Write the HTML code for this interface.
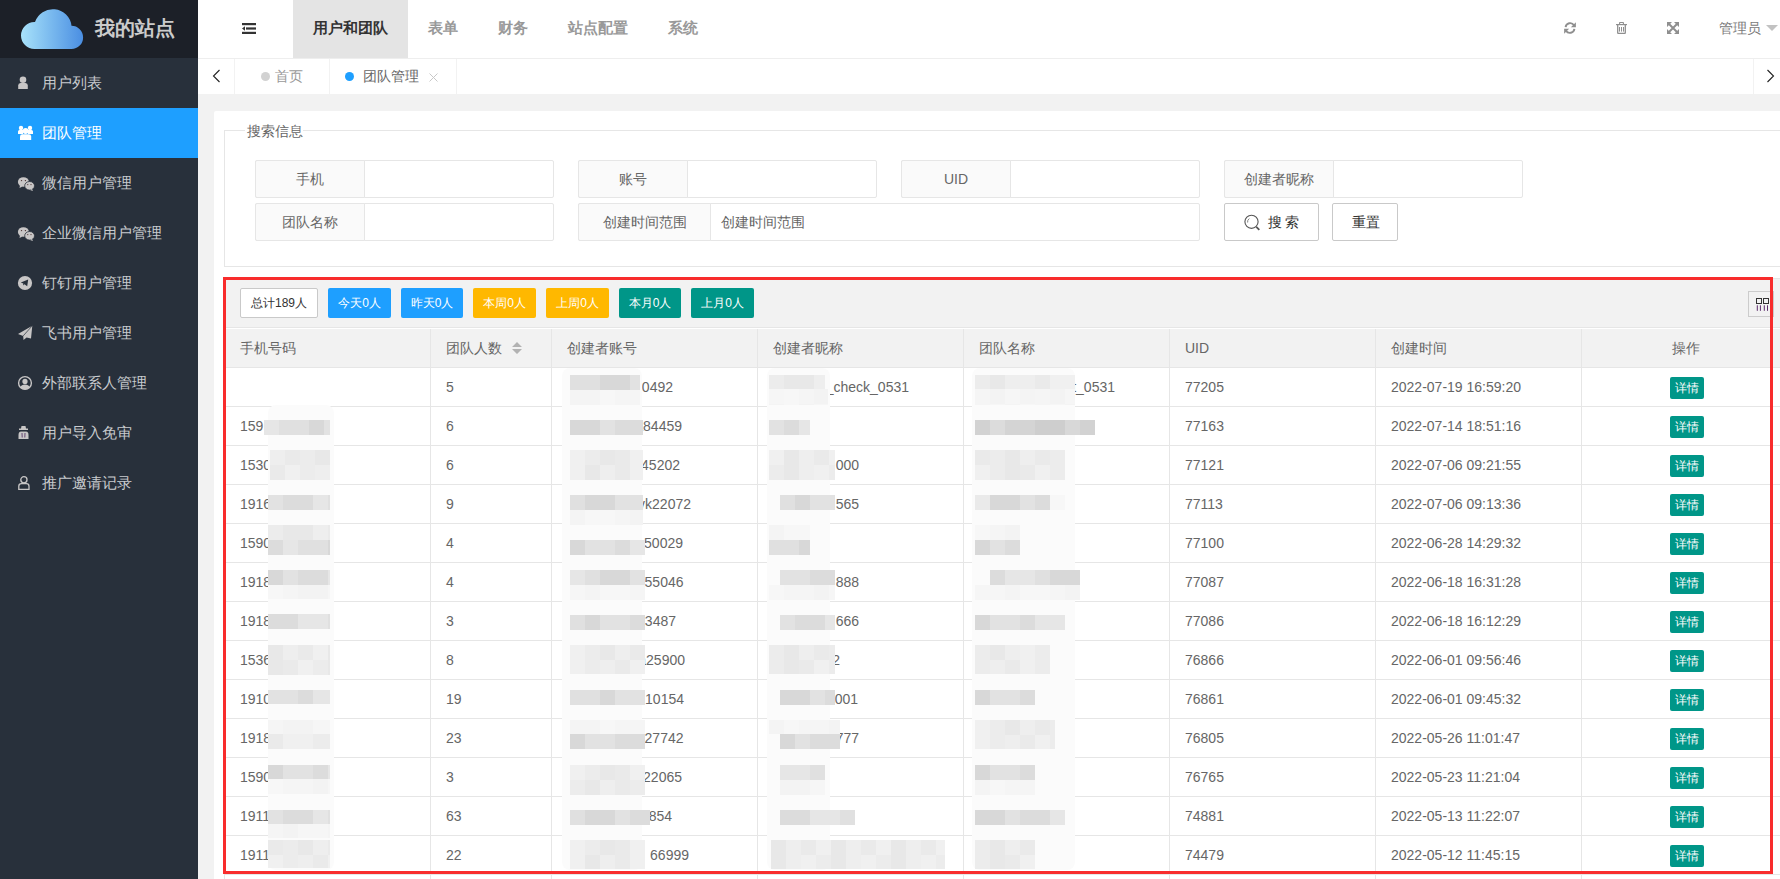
<!DOCTYPE html><html><head><meta charset="utf-8"><style>
*{margin:0;padding:0;box-sizing:border-box}
html,body{width:1780px;height:879px;overflow:hidden}
body{position:relative;background:#f2f2f2;font-family:"Liberation Sans",sans-serif;font-size:14px;color:#666}
.abs{position:absolute}
.t{position:absolute;white-space:nowrap;line-height:1}
</style></head><body>
<div class="abs" style="left:0;top:0;width:198px;height:879px;background:#28303b"></div>
<div class="abs" style="left:0;top:0;width:198px;height:58px;background:#1c2028"></div>
<svg class="abs" style="left:20px;top:8px" width="64" height="42" viewBox="0 0 64 42">
<defs><linearGradient id="cg" x1="0" x2="1" y1="0" y2="0"><stop offset="0" stop-color="#a8e2fa"/><stop offset="0.5" stop-color="#78b8ee"/><stop offset="1" stop-color="#4a8ee2"/></linearGradient></defs>
<path d="M14.5 41 A13.5 13.5 0 0 1 14.5 14 L15 14 A18.8 18.8 0 0 1 51.5 17.8 A11.6 11.6 0 0 1 51.5 41 Z" fill="url(#cg)"/></svg>
<div class="t" style="left:95px;top:18px;font-size:20px;font-weight:bold;color:#cbcbcb">我的站点</div>
<div class="t" style="left:42px;top:75px;font-size:15px;color:#c9cbce">用户列表</div>
<div class="abs" style="left:0;top:108px;width:198px;height:50px;background:#1e9fff"></div>
<div class="t" style="left:42px;top:125px;font-size:15px;color:#fff">团队管理</div>
<div class="t" style="left:42px;top:175px;font-size:15px;color:#c9cbce">微信用户管理</div>
<div class="t" style="left:42px;top:225px;font-size:15px;color:#c9cbce">企业微信用户管理</div>
<div class="t" style="left:42px;top:275px;font-size:15px;color:#c9cbce">钉钉用户管理</div>
<div class="t" style="left:42px;top:325px;font-size:15px;color:#c9cbce">飞书用户管理</div>
<div class="t" style="left:42px;top:375px;font-size:15px;color:#c9cbce">外部联系人管理</div>
<div class="t" style="left:42px;top:425px;font-size:15px;color:#c9cbce">用户导入免审</div>
<div class="t" style="left:42px;top:475px;font-size:15px;color:#c9cbce">推广邀请记录</div>
<svg class="abs" style="left:17px;top:75px" width="12" height="15" viewBox="0 0 12 15"><circle cx="6" cy="4.8" r="3.3" fill="#c8c6c6"/><path d="M1.2 14 L1.2 10.5 Q1.2 8 3.5 8 L8.5 8 Q10.8 8 10.8 10.5 L10.8 14 Z" fill="#c8c6c6"/></svg>
<svg class="abs" style="left:17px;top:125px" width="17" height="16" viewBox="0 0 17 16"><circle cx="4" cy="3" r="2.2" fill="#fff"/><circle cx="13" cy="3" r="2.2" fill="#fff"/><path d="M1 9 L1 6.5 Q1 5 2.5 5 L6 5 L6 9 Z M16 9 L16 6.5 Q16 5 14.5 5 L11 5 L11 9Z" fill="#fff"/><circle cx="8.6" cy="6" r="2.9" fill="#fff"/><path d="M3 15 L3 11.5 Q3 9.3 5.3 9.3 L11.9 9.3 Q14.2 9.3 14.2 11.5 L14.2 15 Z" fill="#fff"/></svg>
<svg class="abs" style="left:17px;top:176px" width="18" height="16" viewBox="0 0 18 16"><ellipse cx="6.4" cy="6" rx="5.5" ry="4.8" fill="#c8c6c6"/><path d="M3 9.5 L2.5 12 L5.5 10.5Z" fill="#c8c6c6"/><ellipse cx="12.6" cy="9.8" rx="4.9" ry="4.3" fill="#c8c6c6" stroke="#28303b" stroke-width="0.8"/><path d="M15 13 L16 15 L13 14Z" fill="#c8c6c6"/><circle cx="4.5" cy="4.6" r="0.7" fill="#4a3030"/><circle cx="8.4" cy="4.6" r="0.7" fill="#4a3030"/><circle cx="10.8" cy="8.6" r="0.6" fill="#4a3030"/><circle cx="14" cy="8.6" r="0.6" fill="#4a3030"/></svg>
<svg class="abs" style="left:17px;top:226px" width="18" height="16" viewBox="0 0 18 16"><ellipse cx="6.4" cy="6" rx="5.5" ry="4.8" fill="#c8c6c6"/><path d="M3 9.5 L2.5 12 L5.5 10.5Z" fill="#c8c6c6"/><ellipse cx="12.6" cy="9.8" rx="4.9" ry="4.3" fill="#c8c6c6" stroke="#28303b" stroke-width="0.8"/><path d="M15 13 L16 15 L13 14Z" fill="#c8c6c6"/><circle cx="4.5" cy="4.6" r="0.7" fill="#4a3030"/><circle cx="8.4" cy="4.6" r="0.7" fill="#4a3030"/><circle cx="10.8" cy="8.6" r="0.6" fill="#4a3030"/><circle cx="14" cy="8.6" r="0.6" fill="#4a3030"/></svg>
<svg class="abs" style="left:17px;top:275px" width="16" height="16" viewBox="0 0 16 16"><circle cx="8" cy="8" r="7.1" fill="#c8c6c6"/><path d="M3.8 7.6 L11.2 4.6 L10.2 11.2 L7.5 9.3 L6.2 10.6 L6.3 8.6 Z" fill="#28303b"/></svg>
<svg class="abs" style="left:17px;top:325px" width="16" height="16" viewBox="0 0 16 16"><path d="M1 8.9 L15.3 0.7 L14 13.6 L9.6 12.5 L6.5 14.9 L6.2 10.9 Z" fill="#c8c6c6"/><path d="M6.2 10.9 L15.3 0.7" stroke="#28303b" stroke-width="0.7"/></svg>
<svg class="abs" style="left:17px;top:375px" width="16" height="16" viewBox="0 0 16 16"><circle cx="8" cy="8" r="6.4" fill="none" stroke="#c8c6c6" stroke-width="1.4"/><circle cx="8" cy="6.4" r="2.6" fill="#c8c6c6"/><path d="M3.3 12.2 Q4.5 9.5 8 9.5 Q11.5 9.5 12.7 12.2 Q10.8 14.4 8 14.4 Q5.2 14.4 3.3 12.2Z" fill="#c8c6c6"/></svg>
<svg class="abs" style="left:17px;top:425px" width="13" height="15" viewBox="0 0 13 15"><path d="M4.5 1 L8.5 1 L9 3.5 L11 3.5 L11 5 L2 5 L2 3.5 L4 3.5Z" fill="#c8c6c6"/><path d="M1.5 14 L1.5 10 Q1.5 6.5 4 6.5 L9 6.5 Q11.5 6.5 11.5 10 L11.5 14 Z" fill="#c8c6c6"/><path d="M5 8 L5.2 12.5 M8 8 L7.8 12.5" stroke="#5a3a6a" stroke-width="0.9"/><path d="M3.2 5.6 L9.8 5.6" stroke="#28303b" stroke-width="0.8"/></svg>
<svg class="abs" style="left:17px;top:475px" width="14" height="16" viewBox="0 0 14 16"><circle cx="6.9" cy="4.8" r="3.1" fill="none" stroke="#c8c6c6" stroke-width="1.3"/><path d="M1.8 14.3 L1.8 11.2 Q1.8 8.6 4.4 8.6 L9.4 8.6 Q12 8.6 12 11.2 L12 14.3 Z" fill="none" stroke="#c8c6c6" stroke-width="1.3"/></svg>
<div class="abs" style="left:198px;top:0;width:1582px;height:58px;background:#fff"></div>
<div class="abs" style="left:293px;top:0;width:115px;height:58px;background:#e4e4e4"></div>
<svg class="abs" style="left:242px;top:23px" width="14" height="11" viewBox="0 0 14 11"><rect x="0" y="0" width="14" height="2.2" fill="#333"/><rect x="4" y="4.4" width="10" height="2.2" fill="#333"/><rect x="0" y="8.8" width="14" height="2.2" fill="#333"/><path d="M0 5.5 L3 3.2 L3 7.8 Z" fill="#333"/></svg>
<div class="t" style="left:313px;top:20px;font-size:15px;font-weight:bold;color:#333">用户和团队</div>
<div class="t" style="left:428px;top:20px;font-size:15px;font-weight:bold;color:#999">表单</div>
<div class="t" style="left:498px;top:20px;font-size:15px;font-weight:bold;color:#999">财务</div>
<div class="t" style="left:568px;top:20px;font-size:15px;font-weight:bold;color:#999">站点配置</div>
<div class="t" style="left:668px;top:20px;font-size:15px;font-weight:bold;color:#999">系统</div>
<div class="t" style="left:1719px;top:21px;font-size:14px;color:#7a7a7a">管理员</div>
<svg class="abs" style="left:1766px;top:25px" width="12" height="6"><path d="M0 0 L12 0 L6 6 Z" fill="#c2c2c2"/></svg>
<svg class="abs" style="left:1564px;top:22px" width="12" height="12" viewBox="0 0 12 12"><path d="M1.6 5.2 A4.6 4.6 0 0 1 10 3.2" fill="none" stroke="#8f8f8f" stroke-width="1.9"/><path d="M11.9 0.3 L11.9 5.3 L6.9 5.3Z" fill="#8f8f8f"/><path d="M10.4 6.8 A4.6 4.6 0 0 1 2 8.8" fill="none" stroke="#8f8f8f" stroke-width="1.9"/><path d="M0.1 11.7 L0.1 6.7 L5.1 6.7Z" fill="#8f8f8f"/></svg>
<svg class="abs" style="left:1616px;top:22px" width="11" height="12" viewBox="0 0 11 12"><path d="M0 2.6 L11 2.6" stroke="#8f8f8f" stroke-width="1.2"/><path d="M3.6 2.3 L3.6 1 Q3.6 0.5 4.1 0.5 L6.9 0.5 Q7.4 0.5 7.4 1 L7.4 2.3" fill="none" stroke="#8f8f8f" stroke-width="1.1"/><path d="M1.7 3 L1.7 10.8 Q1.7 11.4 2.3 11.4 L8.7 11.4 Q9.3 11.4 9.3 10.8 L9.3 3" fill="none" stroke="#8f8f8f" stroke-width="1.3"/><path d="M3.5 5 L3.5 9.6 M5.5 5 L5.5 9.6 M7.5 5 L7.5 9.6" stroke="#8f8f8f" stroke-width="1"/></svg>
<svg class="abs" style="left:1667px;top:22px" width="12" height="12" viewBox="0 0 12 12"><path d="M1.5 1.5 L10.5 10.5 M10.5 1.5 L1.5 10.5" stroke="#8f8f8f" stroke-width="2"/><path d="M0 0 L5 0 L0 5Z M12 0 L12 5 L7 0Z M0 12 L0 7 L5 12Z M12 12 L7 12 L12 7Z" fill="#8f8f8f"/></svg>
<div class="abs" style="left:198px;top:58px;width:1582px;height:1px;background:#eee"></div>
<div class="abs" style="left:198px;top:59px;width:1582px;height:35px;background:#fff"></div>
<div class="abs" style="left:234px;top:59px;width:1px;height:35px;background:#f2f2f2"></div>
<div class="abs" style="left:329px;top:59px;width:1px;height:35px;background:#f2f2f2"></div>
<div class="abs" style="left:456px;top:59px;width:1px;height:35px;background:#f2f2f2"></div>
<div class="abs" style="left:1753px;top:59px;width:1px;height:35px;background:#f2f2f2"></div>
<div class="abs" style="left:261px;top:72px;width:9px;height:9px;border-radius:50%;background:#d2d2d2"></div>
<div class="t" style="left:275px;top:69px;font-size:14px;color:#999">首页</div>
<div class="abs" style="left:345px;top:72px;width:9px;height:9px;border-radius:50%;background:#1e9fff"></div>
<div class="t" style="left:363px;top:69px;font-size:14px;color:#666">团队管理</div>
<svg class="abs" style="left:429px;top:73px" width="9" height="9"><path d="M0.5 0.5 L8.5 8.5 M8.5 0.5 L0.5 8.5" stroke="#c8c8c8" stroke-width="1"/></svg>
<svg class="abs" style="left:211px;top:69px" width="10" height="14" viewBox="0 0 10 14"><path d="M8.5 1 L2.5 7 L8.5 13" fill="none" stroke="#222" stroke-width="1.1"/></svg>
<svg class="abs" style="left:1766px;top:69px" width="10" height="14" viewBox="0 0 10 14"><path d="M1.5 1 L7.5 7 L1.5 13" fill="none" stroke="#222" stroke-width="1.1"/></svg>
<div class="abs" style="left:214px;top:111px;width:1600px;height:800px;background:#fff;border-radius:2px"></div>
<div class="abs" style="left:224px;top:130px;width:1600px;height:137px;border:1px solid #e6e6e6"></div>
<div class="abs" style="left:245px;top:122px;width:58px;height:16px;background:#fff"></div>
<div class="t" style="left:247px;top:124px;font-size:14px;color:#666">搜索信息</div>
<div class="abs" style="left:255px;top:160px;width:299px;height:38px;border:1px solid #e6e6e6;border-radius:2px;background:#fff"></div>
<div class="abs" style="left:255px;top:160px;width:110px;height:38px;border:1px solid #e6e6e6;border-radius:2px 0 0 2px;background:#fafafa;text-align:center;line-height:36px;color:#666;font-size:14px;white-space:nowrap">手机</div>
<div class="abs" style="left:578px;top:160px;width:299px;height:38px;border:1px solid #e6e6e6;border-radius:2px;background:#fff"></div>
<div class="abs" style="left:578px;top:160px;width:110px;height:38px;border:1px solid #e6e6e6;border-radius:2px 0 0 2px;background:#fafafa;text-align:center;line-height:36px;color:#666;font-size:14px;white-space:nowrap">账号</div>
<div class="abs" style="left:901px;top:160px;width:299px;height:38px;border:1px solid #e6e6e6;border-radius:2px;background:#fff"></div>
<div class="abs" style="left:901px;top:160px;width:110px;height:38px;border:1px solid #e6e6e6;border-radius:2px 0 0 2px;background:#fafafa;text-align:center;line-height:36px;color:#666;font-size:14px;white-space:nowrap">UID</div>
<div class="abs" style="left:1224px;top:160px;width:299px;height:38px;border:1px solid #e6e6e6;border-radius:2px;background:#fff"></div>
<div class="abs" style="left:1224px;top:160px;width:110px;height:38px;border:1px solid #e6e6e6;border-radius:2px 0 0 2px;background:#fafafa;text-align:center;line-height:36px;color:#666;font-size:14px;white-space:nowrap">创建者昵称</div>
<div class="abs" style="left:255px;top:203px;width:299px;height:38px;border:1px solid #e6e6e6;border-radius:2px;background:#fff"></div>
<div class="abs" style="left:255px;top:203px;width:110px;height:38px;border:1px solid #e6e6e6;border-radius:2px 0 0 2px;background:#fafafa;text-align:center;line-height:36px;color:#666;font-size:14px;white-space:nowrap">团队名称</div>
<div class="abs" style="left:578px;top:203px;width:622px;height:38px;border:1px solid #e6e6e6;border-radius:2px;background:#fff"></div>
<div class="abs" style="left:578px;top:203px;width:133px;height:38px;border:1px solid #e6e6e6;border-radius:2px 0 0 2px;background:#fafafa;text-align:center;line-height:36px;color:#666;font-size:14px;white-space:nowrap">创建时间范围</div>
<div class="t" style="left:721px;top:215px;font-size:14px;color:#666">创建时间范围</div>
<div class="abs" style="left:1224px;top:203px;width:95px;height:38px;border:1px solid #c9c9c9;border-radius:2px;background:#fff"></div>
<div class="t" style="left:1268px;top:215px;font-size:14px;color:#333;letter-spacing:3px">搜索</div>
<svg class="abs" style="left:1243px;top:214px" width="18" height="18" viewBox="0 0 18 18"><circle cx="8.5" cy="7.8" r="6.6" fill="none" stroke="#555" stroke-width="1.1"/><path d="M4.6 8.5 A4 4 0 0 1 6.3 4.6" fill="none" stroke="#777" stroke-width="0.9"/><path d="M13.3 12.8 L16.3 15.8" stroke="#555" stroke-width="1.8"/></svg>
<div class="abs" style="left:1332px;top:203px;width:66px;height:38px;border:1px solid #c9c9c9;border-radius:2px;background:#fff"></div>
<div class="t" style="left:1352px;top:215px;font-size:14px;color:#333">重置</div>
<div class="abs" style="left:224px;top:278px;width:1600px;height:700px;border:1px solid #e6e6e6;background:#fff"></div>
<div class="abs" style="left:225px;top:279px;width:1600px;height:49px;background:#f2f2f2;border-bottom:1px solid #e6e6e6"></div>
<div class="abs" style="left:225px;top:329px;width:1600px;height:39px;background:#f2f2f2;border-bottom:1px solid #e6e6e6"></div>
<div class="abs" style="left:240px;top:288px;width:78px;height:30px;background:#fff;border:1px solid #c9c9c9;border-radius:2px;color:#333;font-size:12px;line-height:28px;text-align:center;white-space:nowrap">总计189人</div>
<div class="abs" style="left:328px;top:288px;width:63px;height:30px;background:#1e9fff;border-radius:2px;color:#fff;font-size:12px;line-height:30px;text-align:center;white-space:nowrap">今天0人</div>
<div class="abs" style="left:401px;top:288px;width:62px;height:30px;background:#1e9fff;border-radius:2px;color:#fff;font-size:12px;line-height:30px;text-align:center;white-space:nowrap">昨天0人</div>
<div class="abs" style="left:473px;top:288px;width:63px;height:30px;background:#ffb800;border-radius:2px;color:#fff;font-size:12px;line-height:30px;text-align:center;white-space:nowrap">本周0人</div>
<div class="abs" style="left:546px;top:288px;width:63px;height:30px;background:#ffb800;border-radius:2px;color:#fff;font-size:12px;line-height:30px;text-align:center;white-space:nowrap">上周0人</div>
<div class="abs" style="left:619px;top:288px;width:62px;height:30px;background:#009688;border-radius:2px;color:#fff;font-size:12px;line-height:30px;text-align:center;white-space:nowrap">本月0人</div>
<div class="abs" style="left:691px;top:288px;width:63px;height:30px;background:#009688;border-radius:2px;color:#fff;font-size:12px;line-height:30px;text-align:center;white-space:nowrap">上月0人</div>
<div class="abs" style="left:1748px;top:291px;width:26px;height:26px;border:1px solid #ccc"></div>
<svg class="abs" style="left:1756px;top:298px" width="13" height="13" viewBox="0 0 13 13"><rect x="0.5" y="0.5" width="5" height="5" fill="none" stroke="#333" stroke-width="1"/><rect x="7.5" y="0.5" width="5" height="5" fill="none" stroke="#333" stroke-width="1"/><path d="M1.3 7.3 L1.3 12.8 M4.4 7.3 L4.4 12.8 M8.3 7.3 L8.3 12.8 M11.5 7.3 L11.5 12.8" stroke="#5a2a6a" stroke-width="1"/></svg>
<div class="abs" style="left:430px;top:329px;width:1px;height:600px;background:#e6e6e6"></div>
<div class="abs" style="left:551px;top:329px;width:1px;height:600px;background:#e6e6e6"></div>
<div class="abs" style="left:757px;top:329px;width:1px;height:600px;background:#e6e6e6"></div>
<div class="abs" style="left:963px;top:329px;width:1px;height:600px;background:#e6e6e6"></div>
<div class="abs" style="left:1169px;top:329px;width:1px;height:600px;background:#e6e6e6"></div>
<div class="abs" style="left:1375px;top:329px;width:1px;height:600px;background:#e6e6e6"></div>
<div class="abs" style="left:1581px;top:329px;width:1px;height:600px;background:#e6e6e6"></div>
<div class="t" style="left:240px;top:341px;font-size:14px;color:#666">手机号码</div>
<div class="t" style="left:446px;top:341px;font-size:14px;color:#666">团队人数</div>
<div class="t" style="left:567px;top:341px;font-size:14px;color:#666">创建者账号</div>
<div class="t" style="left:773px;top:341px;font-size:14px;color:#666">创建者昵称</div>
<div class="t" style="left:979px;top:341px;font-size:14px;color:#666">团队名称</div>
<div class="t" style="left:1185px;top:341px;font-size:14px;color:#666">UID</div>
<div class="t" style="left:1391px;top:341px;font-size:14px;color:#666">创建时间</div>
<div class="t" style="left:1672px;top:341px;font-size:14px;color:#666">操作</div>
<svg class="abs" style="left:512px;top:342px" width="10" height="12"><path d="M0 5 L5 0 L10 5Z M0 7 L5 12 L10 7Z" fill="#b2b2b2"/></svg>
<div class="abs" style="left:225px;top:406px;width:1600px;height:1px;background:#e6e6e6"></div>
<div class="t" style="left:240px;top:380px;color:#666"></div>
<div class="t" style="left:446px;top:380px;color:#666">5</div>
<div class="t" style="left:1185px;top:380px;color:#666">77205</div>
<div class="t" style="left:1391px;top:380px;color:#666">2022-07-19 16:59:20</div>
<div class="abs" style="left:1670px;top:377px;width:34px;height:22px;background:#009688;border-radius:2px;color:#fff;font-size:12px;line-height:22px;text-align:center">详情</div>
<div class="abs" style="left:225px;top:445px;width:1600px;height:1px;background:#e6e6e6"></div>
<div class="t" style="left:240px;top:419px;color:#666">159</div>
<div class="t" style="left:446px;top:419px;color:#666">6</div>
<div class="t" style="left:1185px;top:419px;color:#666">77163</div>
<div class="t" style="left:1391px;top:419px;color:#666">2022-07-14 18:51:16</div>
<div class="abs" style="left:1670px;top:416px;width:34px;height:22px;background:#009688;border-radius:2px;color:#fff;font-size:12px;line-height:22px;text-align:center">详情</div>
<div class="abs" style="left:225px;top:484px;width:1600px;height:1px;background:#e6e6e6"></div>
<div class="t" style="left:240px;top:458px;color:#666">1530</div>
<div class="t" style="left:446px;top:458px;color:#666">6</div>
<div class="t" style="left:1185px;top:458px;color:#666">77121</div>
<div class="t" style="left:1391px;top:458px;color:#666">2022-07-06 09:21:55</div>
<div class="abs" style="left:1670px;top:455px;width:34px;height:22px;background:#009688;border-radius:2px;color:#fff;font-size:12px;line-height:22px;text-align:center">详情</div>
<div class="abs" style="left:225px;top:523px;width:1600px;height:1px;background:#e6e6e6"></div>
<div class="t" style="left:240px;top:497px;color:#666">1916</div>
<div class="t" style="left:446px;top:497px;color:#666">9</div>
<div class="t" style="left:1185px;top:497px;color:#666">77113</div>
<div class="t" style="left:1391px;top:497px;color:#666">2022-07-06 09:13:36</div>
<div class="abs" style="left:1670px;top:494px;width:34px;height:22px;background:#009688;border-radius:2px;color:#fff;font-size:12px;line-height:22px;text-align:center">详情</div>
<div class="abs" style="left:225px;top:562px;width:1600px;height:1px;background:#e6e6e6"></div>
<div class="t" style="left:240px;top:536px;color:#666">1590</div>
<div class="t" style="left:446px;top:536px;color:#666">4</div>
<div class="t" style="left:1185px;top:536px;color:#666">77100</div>
<div class="t" style="left:1391px;top:536px;color:#666">2022-06-28 14:29:32</div>
<div class="abs" style="left:1670px;top:533px;width:34px;height:22px;background:#009688;border-radius:2px;color:#fff;font-size:12px;line-height:22px;text-align:center">详情</div>
<div class="abs" style="left:225px;top:601px;width:1600px;height:1px;background:#e6e6e6"></div>
<div class="t" style="left:240px;top:575px;color:#666">1918</div>
<div class="t" style="left:446px;top:575px;color:#666">4</div>
<div class="t" style="left:1185px;top:575px;color:#666">77087</div>
<div class="t" style="left:1391px;top:575px;color:#666">2022-06-18 16:31:28</div>
<div class="abs" style="left:1670px;top:572px;width:34px;height:22px;background:#009688;border-radius:2px;color:#fff;font-size:12px;line-height:22px;text-align:center">详情</div>
<div class="abs" style="left:225px;top:640px;width:1600px;height:1px;background:#e6e6e6"></div>
<div class="t" style="left:240px;top:614px;color:#666">1918</div>
<div class="t" style="left:446px;top:614px;color:#666">3</div>
<div class="t" style="left:1185px;top:614px;color:#666">77086</div>
<div class="t" style="left:1391px;top:614px;color:#666">2022-06-18 16:12:29</div>
<div class="abs" style="left:1670px;top:611px;width:34px;height:22px;background:#009688;border-radius:2px;color:#fff;font-size:12px;line-height:22px;text-align:center">详情</div>
<div class="abs" style="left:225px;top:679px;width:1600px;height:1px;background:#e6e6e6"></div>
<div class="t" style="left:240px;top:653px;color:#666">1536</div>
<div class="t" style="left:446px;top:653px;color:#666">8</div>
<div class="t" style="left:1185px;top:653px;color:#666">76866</div>
<div class="t" style="left:1391px;top:653px;color:#666">2022-06-01 09:56:46</div>
<div class="abs" style="left:1670px;top:650px;width:34px;height:22px;background:#009688;border-radius:2px;color:#fff;font-size:12px;line-height:22px;text-align:center">详情</div>
<div class="abs" style="left:225px;top:718px;width:1600px;height:1px;background:#e6e6e6"></div>
<div class="t" style="left:240px;top:692px;color:#666">1910</div>
<div class="t" style="left:446px;top:692px;color:#666">19</div>
<div class="t" style="left:1185px;top:692px;color:#666">76861</div>
<div class="t" style="left:1391px;top:692px;color:#666">2022-06-01 09:45:32</div>
<div class="abs" style="left:1670px;top:689px;width:34px;height:22px;background:#009688;border-radius:2px;color:#fff;font-size:12px;line-height:22px;text-align:center">详情</div>
<div class="abs" style="left:225px;top:757px;width:1600px;height:1px;background:#e6e6e6"></div>
<div class="t" style="left:240px;top:731px;color:#666">1918</div>
<div class="t" style="left:446px;top:731px;color:#666">23</div>
<div class="t" style="left:1185px;top:731px;color:#666">76805</div>
<div class="t" style="left:1391px;top:731px;color:#666">2022-05-26 11:01:47</div>
<div class="abs" style="left:1670px;top:728px;width:34px;height:22px;background:#009688;border-radius:2px;color:#fff;font-size:12px;line-height:22px;text-align:center">详情</div>
<div class="abs" style="left:225px;top:796px;width:1600px;height:1px;background:#e6e6e6"></div>
<div class="t" style="left:240px;top:770px;color:#666">1590</div>
<div class="t" style="left:446px;top:770px;color:#666">3</div>
<div class="t" style="left:1185px;top:770px;color:#666">76765</div>
<div class="t" style="left:1391px;top:770px;color:#666">2022-05-23 11:21:04</div>
<div class="abs" style="left:1670px;top:767px;width:34px;height:22px;background:#009688;border-radius:2px;color:#fff;font-size:12px;line-height:22px;text-align:center">详情</div>
<div class="abs" style="left:225px;top:835px;width:1600px;height:1px;background:#e6e6e6"></div>
<div class="t" style="left:240px;top:809px;color:#666">1911</div>
<div class="t" style="left:446px;top:809px;color:#666">63</div>
<div class="t" style="left:1185px;top:809px;color:#666">74881</div>
<div class="t" style="left:1391px;top:809px;color:#666">2022-05-13 11:22:07</div>
<div class="abs" style="left:1670px;top:806px;width:34px;height:22px;background:#009688;border-radius:2px;color:#fff;font-size:12px;line-height:22px;text-align:center">详情</div>
<div class="abs" style="left:225px;top:874px;width:1600px;height:1px;background:#e6e6e6"></div>
<div class="t" style="left:240px;top:848px;color:#666">1911</div>
<div class="t" style="left:446px;top:848px;color:#666">22</div>
<div class="t" style="left:1185px;top:848px;color:#666">74479</div>
<div class="t" style="left:1391px;top:848px;color:#666">2022-05-12 11:45:15</div>
<div class="abs" style="left:1670px;top:845px;width:34px;height:22px;background:#009688;border-radius:2px;color:#fff;font-size:12px;line-height:22px;text-align:center">详情</div>
<div class="t" style="right:1107px;top:380px;color:#666">60492</div>
<div class="t" style="right:1098px;top:419px;color:#666">a84459</div>
<div class="t" style="right:1100px;top:458px;color:#666">45202</div>
<div class="t" style="right:1089px;top:497px;color:#666">vk22072</div>
<div class="t" style="right:1097px;top:536px;color:#666">r50029</div>
<div class="t" style="right:1096.5px;top:575px;color:#666">55046</div>
<div class="t" style="right:1104px;top:614px;color:#666">3487</div>
<div class="t" style="right:1095px;top:653px;color:#666">a25900</div>
<div class="t" style="right:1096px;top:692px;color:#666">10154</div>
<div class="t" style="right:1096.5px;top:731px;color:#666">27742</div>
<div class="t" style="right:1098px;top:770px;color:#666">22065</div>
<div class="t" style="right:1108px;top:809px;color:#666">3854</div>
<div class="t" style="right:1091px;top:848px;color:#666">66999</div>
<div class="t" style="right:871px;top:380px;color:#666">_check_0531</div>
<div class="t" style="right:921px;top:458px;color:#666">000</div>
<div class="t" style="right:921px;top:497px;color:#666">565</div>
<div class="t" style="right:921px;top:575px;color:#666">888</div>
<div class="t" style="right:921px;top:614px;color:#666">666</div>
<div class="t" style="right:940px;top:653px;color:#666">2</div>
<div class="t" style="right:922px;top:692px;color:#666">001</div>
<div class="t" style="right:921px;top:731px;color:#666">777</div>
<div class="t" style="right:665px;top:380px;color:#666">t_0531</div>
<div class="t" style="right:716px;top:731px;color:#666">7</div>
<div class="t" style="right:715px;top:809px;color:#666">9</div>
<div class="abs" style="left:268px;top:405px;width:66px;height:465px;background:#fbfbfb;border-radius:8px"></div>
<div class="abs" style="left:562px;top:368px;width:80px;height:502px;background:#fbfbfb;border-radius:8px"></div>
<div class="abs" style="left:767px;top:368px;width:63px;height:502px;background:#fbfbfb;border-radius:8px"></div>
<div class="abs" style="left:972px;top:368px;width:103px;height:502px;background:#fbfbfb;border-radius:8px"></div>
<div class="abs" style="left:264px;top:420px;width:15px;height:15px;background:rgb(230,230,230)"></div>
<div class="abs" style="left:279px;top:420px;width:15px;height:15px;background:rgb(224,224,224)"></div>
<div class="abs" style="left:294px;top:420px;width:15px;height:15px;background:rgb(224,224,224)"></div>
<div class="abs" style="left:309px;top:420px;width:15px;height:15px;background:rgb(216,216,216)"></div>
<div class="abs" style="left:324px;top:420px;width:6px;height:15px;background:rgb(226,226,226)"></div>
<div class="abs" style="left:270px;top:450px;width:15px;height:15px;background:rgb(238,238,238)"></div>
<div class="abs" style="left:270px;top:465px;width:15px;height:15px;background:rgb(234,234,234)"></div>
<div class="abs" style="left:285px;top:450px;width:15px;height:15px;background:rgb(234,234,234)"></div>
<div class="abs" style="left:285px;top:465px;width:15px;height:15px;background:rgb(240,240,240)"></div>
<div class="abs" style="left:300px;top:450px;width:15px;height:15px;background:rgb(236,236,236)"></div>
<div class="abs" style="left:300px;top:465px;width:15px;height:15px;background:rgb(236,236,236)"></div>
<div class="abs" style="left:315px;top:450px;width:15px;height:15px;background:rgb(232,232,232)"></div>
<div class="abs" style="left:315px;top:465px;width:15px;height:15px;background:rgb(238,238,238)"></div>
<div class="abs" style="left:268px;top:495px;width:15px;height:15px;background:rgb(226,226,226)"></div>
<div class="abs" style="left:283px;top:495px;width:15px;height:15px;background:rgb(220,220,220)"></div>
<div class="abs" style="left:298px;top:495px;width:15px;height:15px;background:rgb(220,220,220)"></div>
<div class="abs" style="left:313px;top:495px;width:15px;height:15px;background:rgb(230,230,230)"></div>
<div class="abs" style="left:328px;top:495px;width:2px;height:15px;background:rgb(224,224,224)"></div>
<div class="abs" style="left:268px;top:525px;width:15px;height:15px;background:rgb(236,236,236)"></div>
<div class="abs" style="left:283px;top:525px;width:15px;height:15px;background:rgb(232,232,232)"></div>
<div class="abs" style="left:298px;top:525px;width:15px;height:15px;background:rgb(232,232,232)"></div>
<div class="abs" style="left:313px;top:525px;width:15px;height:15px;background:rgb(238,238,238)"></div>
<div class="abs" style="left:328px;top:525px;width:2px;height:15px;background:rgb(234,234,234)"></div>
<div class="abs" style="left:268px;top:540px;width:15px;height:15px;background:rgb(220,220,220)"></div>
<div class="abs" style="left:283px;top:540px;width:15px;height:15px;background:rgb(230,230,230)"></div>
<div class="abs" style="left:298px;top:540px;width:15px;height:15px;background:rgb(224,224,224)"></div>
<div class="abs" style="left:313px;top:540px;width:15px;height:15px;background:rgb(224,224,224)"></div>
<div class="abs" style="left:328px;top:540px;width:2px;height:15px;background:rgb(216,216,216)"></div>
<div class="abs" style="left:268px;top:570px;width:15px;height:15px;background:rgb(216,216,216)"></div>
<div class="abs" style="left:283px;top:570px;width:15px;height:15px;background:rgb(226,226,226)"></div>
<div class="abs" style="left:298px;top:570px;width:15px;height:15px;background:rgb(220,220,220)"></div>
<div class="abs" style="left:313px;top:570px;width:15px;height:15px;background:rgb(220,220,220)"></div>
<div class="abs" style="left:328px;top:570px;width:2px;height:15px;background:rgb(230,230,230)"></div>
<div class="abs" style="left:268px;top:585px;width:15px;height:14px;background:rgb(247,247,247)"></div>
<div class="abs" style="left:283px;top:585px;width:15px;height:14px;background:rgb(245,245,245)"></div>
<div class="abs" style="left:298px;top:585px;width:15px;height:14px;background:rgb(243,243,243)"></div>
<div class="abs" style="left:313px;top:585px;width:15px;height:14px;background:rgb(243,243,243)"></div>
<div class="abs" style="left:328px;top:585px;width:2px;height:14px;background:rgb(246,246,246)"></div>
<div class="abs" style="left:268px;top:614px;width:15px;height:15px;background:rgb(220,220,220)"></div>
<div class="abs" style="left:283px;top:614px;width:15px;height:15px;background:rgb(220,220,220)"></div>
<div class="abs" style="left:298px;top:614px;width:15px;height:15px;background:rgb(230,230,230)"></div>
<div class="abs" style="left:313px;top:614px;width:15px;height:15px;background:rgb(230,230,230)"></div>
<div class="abs" style="left:328px;top:614px;width:2px;height:15px;background:rgb(224,224,224)"></div>
<div class="abs" style="left:268px;top:645px;width:15px;height:15px;background:rgb(232,232,232)"></div>
<div class="abs" style="left:268px;top:660px;width:15px;height:15px;background:rgb(232,232,232)"></div>
<div class="abs" style="left:283px;top:645px;width:15px;height:15px;background:rgb(238,238,238)"></div>
<div class="abs" style="left:283px;top:660px;width:15px;height:15px;background:rgb(234,234,234)"></div>
<div class="abs" style="left:298px;top:645px;width:15px;height:15px;background:rgb(234,234,234)"></div>
<div class="abs" style="left:298px;top:660px;width:15px;height:15px;background:rgb(240,240,240)"></div>
<div class="abs" style="left:313px;top:645px;width:15px;height:15px;background:rgb(240,240,240)"></div>
<div class="abs" style="left:313px;top:660px;width:15px;height:15px;background:rgb(236,236,236)"></div>
<div class="abs" style="left:328px;top:645px;width:2px;height:15px;background:rgb(232,232,232)"></div>
<div class="abs" style="left:328px;top:660px;width:2px;height:15px;background:rgb(232,232,232)"></div>
<div class="abs" style="left:268px;top:690px;width:15px;height:14px;background:rgb(226,226,226)"></div>
<div class="abs" style="left:283px;top:690px;width:15px;height:14px;background:rgb(226,226,226)"></div>
<div class="abs" style="left:298px;top:690px;width:15px;height:14px;background:rgb(220,220,220)"></div>
<div class="abs" style="left:313px;top:690px;width:15px;height:14px;background:rgb(230,230,230)"></div>
<div class="abs" style="left:328px;top:690px;width:2px;height:14px;background:rgb(230,230,230)"></div>
<div class="abs" style="left:268px;top:720px;width:15px;height:14px;background:rgb(245,245,245)"></div>
<div class="abs" style="left:283px;top:720px;width:15px;height:14px;background:rgb(243,243,243)"></div>
<div class="abs" style="left:298px;top:720px;width:15px;height:14px;background:rgb(243,243,243)"></div>
<div class="abs" style="left:313px;top:720px;width:15px;height:14px;background:rgb(246,246,246)"></div>
<div class="abs" style="left:328px;top:720px;width:2px;height:14px;background:rgb(246,246,246)"></div>
<div class="abs" style="left:268px;top:734px;width:15px;height:15px;background:rgb(234,234,234)"></div>
<div class="abs" style="left:283px;top:734px;width:15px;height:15px;background:rgb(240,240,240)"></div>
<div class="abs" style="left:298px;top:734px;width:15px;height:15px;background:rgb(240,240,240)"></div>
<div class="abs" style="left:313px;top:734px;width:15px;height:15px;background:rgb(236,236,236)"></div>
<div class="abs" style="left:328px;top:734px;width:2px;height:15px;background:rgb(236,236,236)"></div>
<div class="abs" style="left:268px;top:765px;width:15px;height:14px;background:rgb(216,216,216)"></div>
<div class="abs" style="left:283px;top:765px;width:15px;height:14px;background:rgb(226,226,226)"></div>
<div class="abs" style="left:298px;top:765px;width:15px;height:14px;background:rgb(226,226,226)"></div>
<div class="abs" style="left:313px;top:765px;width:15px;height:14px;background:rgb(220,220,220)"></div>
<div class="abs" style="left:328px;top:765px;width:2px;height:14px;background:rgb(230,230,230)"></div>
<div class="abs" style="left:268px;top:779px;width:15px;height:15px;background:rgb(247,247,247)"></div>
<div class="abs" style="left:283px;top:779px;width:15px;height:15px;background:rgb(245,245,245)"></div>
<div class="abs" style="left:298px;top:779px;width:15px;height:15px;background:rgb(245,245,245)"></div>
<div class="abs" style="left:313px;top:779px;width:15px;height:15px;background:rgb(243,243,243)"></div>
<div class="abs" style="left:328px;top:779px;width:2px;height:15px;background:rgb(246,246,246)"></div>
<div class="abs" style="left:268px;top:810px;width:15px;height:14px;background:rgb(226,226,226)"></div>
<div class="abs" style="left:283px;top:810px;width:15px;height:14px;background:rgb(220,220,220)"></div>
<div class="abs" style="left:298px;top:810px;width:15px;height:14px;background:rgb(220,220,220)"></div>
<div class="abs" style="left:313px;top:810px;width:15px;height:14px;background:rgb(230,230,230)"></div>
<div class="abs" style="left:328px;top:810px;width:2px;height:14px;background:rgb(224,224,224)"></div>
<div class="abs" style="left:268px;top:824px;width:15px;height:14px;background:rgb(245,245,245)"></div>
<div class="abs" style="left:283px;top:824px;width:15px;height:14px;background:rgb(243,243,243)"></div>
<div class="abs" style="left:298px;top:824px;width:15px;height:14px;background:rgb(246,246,246)"></div>
<div class="abs" style="left:313px;top:824px;width:15px;height:14px;background:rgb(246,246,246)"></div>
<div class="abs" style="left:328px;top:824px;width:2px;height:14px;background:rgb(244,244,244)"></div>
<div class="abs" style="left:268px;top:840px;width:15px;height:15px;background:rgb(234,234,234)"></div>
<div class="abs" style="left:268px;top:855px;width:15px;height:13px;background:rgb(240,240,240)"></div>
<div class="abs" style="left:283px;top:840px;width:15px;height:15px;background:rgb(236,236,236)"></div>
<div class="abs" style="left:283px;top:855px;width:15px;height:13px;background:rgb(236,236,236)"></div>
<div class="abs" style="left:298px;top:840px;width:15px;height:15px;background:rgb(232,232,232)"></div>
<div class="abs" style="left:298px;top:855px;width:15px;height:13px;background:rgb(238,238,238)"></div>
<div class="abs" style="left:313px;top:840px;width:15px;height:15px;background:rgb(238,238,238)"></div>
<div class="abs" style="left:313px;top:855px;width:15px;height:13px;background:rgb(234,234,234)"></div>
<div class="abs" style="left:328px;top:840px;width:2px;height:15px;background:rgb(234,234,234)"></div>
<div class="abs" style="left:328px;top:855px;width:2px;height:13px;background:rgb(240,240,240)"></div>
<div class="abs" style="left:570px;top:375px;width:15px;height:15px;background:rgb(224,224,224)"></div>
<div class="abs" style="left:585px;top:375px;width:15px;height:15px;background:rgb(224,224,224)"></div>
<div class="abs" style="left:600px;top:375px;width:15px;height:15px;background:rgb(216,216,216)"></div>
<div class="abs" style="left:615px;top:375px;width:15px;height:15px;background:rgb(216,216,216)"></div>
<div class="abs" style="left:630px;top:375px;width:10px;height:15px;background:rgb(226,226,226)"></div>
<div class="abs" style="left:570px;top:390px;width:15px;height:15px;background:rgb(244,244,244)"></div>
<div class="abs" style="left:585px;top:390px;width:15px;height:15px;background:rgb(244,244,244)"></div>
<div class="abs" style="left:600px;top:390px;width:15px;height:15px;background:rgb(247,247,247)"></div>
<div class="abs" style="left:615px;top:390px;width:15px;height:15px;background:rgb(245,245,245)"></div>
<div class="abs" style="left:630px;top:390px;width:10px;height:15px;background:rgb(245,245,245)"></div>
<div class="abs" style="left:570px;top:420px;width:15px;height:15px;background:rgb(216,216,216)"></div>
<div class="abs" style="left:585px;top:420px;width:15px;height:15px;background:rgb(216,216,216)"></div>
<div class="abs" style="left:600px;top:420px;width:15px;height:15px;background:rgb(226,226,226)"></div>
<div class="abs" style="left:615px;top:420px;width:15px;height:15px;background:rgb(220,220,220)"></div>
<div class="abs" style="left:630px;top:420px;width:13px;height:15px;background:rgb(220,220,220)"></div>
<div class="abs" style="left:570px;top:450px;width:15px;height:15px;background:rgb(240,240,240)"></div>
<div class="abs" style="left:570px;top:465px;width:15px;height:15px;background:rgb(240,240,240)"></div>
<div class="abs" style="left:585px;top:450px;width:15px;height:15px;background:rgb(236,236,236)"></div>
<div class="abs" style="left:585px;top:465px;width:15px;height:15px;background:rgb(232,232,232)"></div>
<div class="abs" style="left:600px;top:450px;width:15px;height:15px;background:rgb(232,232,232)"></div>
<div class="abs" style="left:600px;top:465px;width:15px;height:15px;background:rgb(238,238,238)"></div>
<div class="abs" style="left:615px;top:450px;width:15px;height:15px;background:rgb(234,234,234)"></div>
<div class="abs" style="left:615px;top:465px;width:15px;height:15px;background:rgb(234,234,234)"></div>
<div class="abs" style="left:630px;top:450px;width:13px;height:15px;background:rgb(240,240,240)"></div>
<div class="abs" style="left:630px;top:465px;width:13px;height:15px;background:rgb(240,240,240)"></div>
<div class="abs" style="left:570px;top:495px;width:15px;height:15px;background:rgb(224,224,224)"></div>
<div class="abs" style="left:585px;top:495px;width:15px;height:15px;background:rgb(216,216,216)"></div>
<div class="abs" style="left:600px;top:495px;width:15px;height:15px;background:rgb(216,216,216)"></div>
<div class="abs" style="left:615px;top:495px;width:15px;height:15px;background:rgb(226,226,226)"></div>
<div class="abs" style="left:630px;top:495px;width:13px;height:15px;background:rgb(226,226,226)"></div>
<div class="abs" style="left:570px;top:510px;width:15px;height:15px;background:rgb(244,244,244)"></div>
<div class="abs" style="left:585px;top:510px;width:15px;height:15px;background:rgb(247,247,247)"></div>
<div class="abs" style="left:600px;top:510px;width:15px;height:15px;background:rgb(247,247,247)"></div>
<div class="abs" style="left:615px;top:510px;width:15px;height:15px;background:rgb(245,245,245)"></div>
<div class="abs" style="left:630px;top:510px;width:13px;height:15px;background:rgb(243,243,243)"></div>
<div class="abs" style="left:570px;top:540px;width:15px;height:15px;background:rgb(216,216,216)"></div>
<div class="abs" style="left:585px;top:540px;width:15px;height:15px;background:rgb(226,226,226)"></div>
<div class="abs" style="left:600px;top:540px;width:15px;height:15px;background:rgb(226,226,226)"></div>
<div class="abs" style="left:615px;top:540px;width:15px;height:15px;background:rgb(220,220,220)"></div>
<div class="abs" style="left:630px;top:540px;width:15px;height:15px;background:rgb(230,230,230)"></div>
<div class="abs" style="left:570px;top:570px;width:15px;height:15px;background:rgb(230,230,230)"></div>
<div class="abs" style="left:585px;top:570px;width:15px;height:15px;background:rgb(224,224,224)"></div>
<div class="abs" style="left:600px;top:570px;width:15px;height:15px;background:rgb(216,216,216)"></div>
<div class="abs" style="left:615px;top:570px;width:15px;height:15px;background:rgb(216,216,216)"></div>
<div class="abs" style="left:630px;top:570px;width:15px;height:15px;background:rgb(226,226,226)"></div>
<div class="abs" style="left:570px;top:585px;width:15px;height:15px;background:rgb(246,246,246)"></div>
<div class="abs" style="left:585px;top:585px;width:15px;height:15px;background:rgb(244,244,244)"></div>
<div class="abs" style="left:600px;top:585px;width:15px;height:15px;background:rgb(247,247,247)"></div>
<div class="abs" style="left:615px;top:585px;width:15px;height:15px;background:rgb(247,247,247)"></div>
<div class="abs" style="left:630px;top:585px;width:15px;height:15px;background:rgb(245,245,245)"></div>
<div class="abs" style="left:570px;top:615px;width:15px;height:15px;background:rgb(224,224,224)"></div>
<div class="abs" style="left:585px;top:615px;width:15px;height:15px;background:rgb(216,216,216)"></div>
<div class="abs" style="left:600px;top:615px;width:15px;height:15px;background:rgb(226,226,226)"></div>
<div class="abs" style="left:615px;top:615px;width:15px;height:15px;background:rgb(226,226,226)"></div>
<div class="abs" style="left:630px;top:615px;width:15px;height:15px;background:rgb(220,220,220)"></div>
<div class="abs" style="left:570px;top:645px;width:15px;height:15px;background:rgb(240,240,240)"></div>
<div class="abs" style="left:570px;top:660px;width:15px;height:14px;background:rgb(240,240,240)"></div>
<div class="abs" style="left:585px;top:645px;width:15px;height:15px;background:rgb(236,236,236)"></div>
<div class="abs" style="left:585px;top:660px;width:15px;height:14px;background:rgb(236,236,236)"></div>
<div class="abs" style="left:600px;top:645px;width:15px;height:15px;background:rgb(232,232,232)"></div>
<div class="abs" style="left:600px;top:660px;width:15px;height:14px;background:rgb(238,238,238)"></div>
<div class="abs" style="left:615px;top:645px;width:15px;height:15px;background:rgb(238,238,238)"></div>
<div class="abs" style="left:615px;top:660px;width:15px;height:14px;background:rgb(234,234,234)"></div>
<div class="abs" style="left:630px;top:645px;width:15px;height:15px;background:rgb(234,234,234)"></div>
<div class="abs" style="left:630px;top:660px;width:15px;height:14px;background:rgb(240,240,240)"></div>
<div class="abs" style="left:570px;top:690px;width:15px;height:15px;background:rgb(224,224,224)"></div>
<div class="abs" style="left:585px;top:690px;width:15px;height:15px;background:rgb(224,224,224)"></div>
<div class="abs" style="left:600px;top:690px;width:15px;height:15px;background:rgb(216,216,216)"></div>
<div class="abs" style="left:615px;top:690px;width:15px;height:15px;background:rgb(226,226,226)"></div>
<div class="abs" style="left:630px;top:690px;width:15px;height:15px;background:rgb(226,226,226)"></div>
<div class="abs" style="left:570px;top:720px;width:15px;height:14px;background:rgb(244,244,244)"></div>
<div class="abs" style="left:585px;top:720px;width:15px;height:14px;background:rgb(244,244,244)"></div>
<div class="abs" style="left:600px;top:720px;width:15px;height:14px;background:rgb(247,247,247)"></div>
<div class="abs" style="left:615px;top:720px;width:15px;height:14px;background:rgb(245,245,245)"></div>
<div class="abs" style="left:630px;top:720px;width:15px;height:14px;background:rgb(245,245,245)"></div>
<div class="abs" style="left:570px;top:734px;width:15px;height:15px;background:rgb(216,216,216)"></div>
<div class="abs" style="left:585px;top:734px;width:15px;height:15px;background:rgb(226,226,226)"></div>
<div class="abs" style="left:600px;top:734px;width:15px;height:15px;background:rgb(226,226,226)"></div>
<div class="abs" style="left:615px;top:734px;width:15px;height:15px;background:rgb(220,220,220)"></div>
<div class="abs" style="left:630px;top:734px;width:15px;height:15px;background:rgb(220,220,220)"></div>
<div class="abs" style="left:570px;top:765px;width:15px;height:15px;background:rgb(240,240,240)"></div>
<div class="abs" style="left:570px;top:780px;width:15px;height:15px;background:rgb(236,236,236)"></div>
<div class="abs" style="left:585px;top:765px;width:15px;height:15px;background:rgb(236,236,236)"></div>
<div class="abs" style="left:585px;top:780px;width:15px;height:15px;background:rgb(232,232,232)"></div>
<div class="abs" style="left:600px;top:765px;width:15px;height:15px;background:rgb(232,232,232)"></div>
<div class="abs" style="left:600px;top:780px;width:15px;height:15px;background:rgb(238,238,238)"></div>
<div class="abs" style="left:615px;top:765px;width:15px;height:15px;background:rgb(234,234,234)"></div>
<div class="abs" style="left:615px;top:780px;width:15px;height:15px;background:rgb(234,234,234)"></div>
<div class="abs" style="left:630px;top:765px;width:15px;height:15px;background:rgb(240,240,240)"></div>
<div class="abs" style="left:630px;top:780px;width:15px;height:15px;background:rgb(236,236,236)"></div>
<div class="abs" style="left:570px;top:810px;width:15px;height:15px;background:rgb(224,224,224)"></div>
<div class="abs" style="left:585px;top:810px;width:15px;height:15px;background:rgb(216,216,216)"></div>
<div class="abs" style="left:600px;top:810px;width:15px;height:15px;background:rgb(216,216,216)"></div>
<div class="abs" style="left:615px;top:810px;width:15px;height:15px;background:rgb(226,226,226)"></div>
<div class="abs" style="left:630px;top:810px;width:15px;height:15px;background:rgb(220,220,220)"></div>
<div class="abs" style="left:645px;top:810px;width:5px;height:15px;background:rgb(220,220,220)"></div>
<div class="abs" style="left:570px;top:840px;width:15px;height:15px;background:rgb(240,240,240)"></div>
<div class="abs" style="left:570px;top:855px;width:15px;height:14px;background:rgb(240,240,240)"></div>
<div class="abs" style="left:585px;top:840px;width:15px;height:15px;background:rgb(236,236,236)"></div>
<div class="abs" style="left:585px;top:855px;width:15px;height:14px;background:rgb(232,232,232)"></div>
<div class="abs" style="left:600px;top:840px;width:15px;height:15px;background:rgb(232,232,232)"></div>
<div class="abs" style="left:600px;top:855px;width:15px;height:14px;background:rgb(238,238,238)"></div>
<div class="abs" style="left:615px;top:840px;width:15px;height:15px;background:rgb(234,234,234)"></div>
<div class="abs" style="left:615px;top:855px;width:15px;height:14px;background:rgb(234,234,234)"></div>
<div class="abs" style="left:630px;top:840px;width:15px;height:15px;background:rgb(240,240,240)"></div>
<div class="abs" style="left:630px;top:855px;width:15px;height:14px;background:rgb(240,240,240)"></div>
<div class="abs" style="left:769px;top:375px;width:15px;height:14px;background:rgb(236,236,236)"></div>
<div class="abs" style="left:784px;top:375px;width:15px;height:14px;background:rgb(232,232,232)"></div>
<div class="abs" style="left:799px;top:375px;width:15px;height:14px;background:rgb(232,232,232)"></div>
<div class="abs" style="left:814px;top:375px;width:11px;height:14px;background:rgb(238,238,238)"></div>
<div class="abs" style="left:769px;top:389px;width:15px;height:15px;background:rgb(246,246,246)"></div>
<div class="abs" style="left:769px;top:404px;width:15px;height:1px;background:rgb(244,244,244)"></div>
<div class="abs" style="left:784px;top:389px;width:15px;height:15px;background:rgb(247,247,247)"></div>
<div class="abs" style="left:784px;top:404px;width:15px;height:1px;background:rgb(247,247,247)"></div>
<div class="abs" style="left:799px;top:389px;width:15px;height:15px;background:rgb(245,245,245)"></div>
<div class="abs" style="left:799px;top:404px;width:15px;height:1px;background:rgb(243,243,243)"></div>
<div class="abs" style="left:814px;top:389px;width:14px;height:15px;background:rgb(243,243,243)"></div>
<div class="abs" style="left:814px;top:404px;width:14px;height:1px;background:rgb(246,246,246)"></div>
<div class="abs" style="left:769px;top:420px;width:15px;height:15px;background:rgb(226,226,226)"></div>
<div class="abs" style="left:784px;top:420px;width:15px;height:15px;background:rgb(220,220,220)"></div>
<div class="abs" style="left:799px;top:420px;width:11px;height:15px;background:rgb(230,230,230)"></div>
<div class="abs" style="left:769px;top:450px;width:15px;height:15px;background:rgb(240,240,240)"></div>
<div class="abs" style="left:769px;top:465px;width:15px;height:15px;background:rgb(236,236,236)"></div>
<div class="abs" style="left:784px;top:450px;width:15px;height:15px;background:rgb(232,232,232)"></div>
<div class="abs" style="left:784px;top:465px;width:15px;height:15px;background:rgb(232,232,232)"></div>
<div class="abs" style="left:799px;top:450px;width:15px;height:15px;background:rgb(238,238,238)"></div>
<div class="abs" style="left:799px;top:465px;width:15px;height:15px;background:rgb(238,238,238)"></div>
<div class="abs" style="left:814px;top:450px;width:15px;height:15px;background:rgb(234,234,234)"></div>
<div class="abs" style="left:814px;top:465px;width:15px;height:15px;background:rgb(240,240,240)"></div>
<div class="abs" style="left:829px;top:450px;width:6px;height:15px;background:rgb(240,240,240)"></div>
<div class="abs" style="left:829px;top:465px;width:6px;height:15px;background:rgb(236,236,236)"></div>
<div class="abs" style="left:780px;top:495px;width:15px;height:15px;background:rgb(224,224,224)"></div>
<div class="abs" style="left:795px;top:495px;width:15px;height:15px;background:rgb(216,216,216)"></div>
<div class="abs" style="left:810px;top:495px;width:15px;height:15px;background:rgb(226,226,226)"></div>
<div class="abs" style="left:825px;top:495px;width:10px;height:15px;background:rgb(226,226,226)"></div>
<div class="abs" style="left:769px;top:525px;width:15px;height:15px;background:rgb(244,244,244)"></div>
<div class="abs" style="left:784px;top:525px;width:15px;height:15px;background:rgb(247,247,247)"></div>
<div class="abs" style="left:799px;top:525px;width:11px;height:15px;background:rgb(247,247,247)"></div>
<div class="abs" style="left:769px;top:540px;width:15px;height:15px;background:rgb(224,224,224)"></div>
<div class="abs" style="left:784px;top:540px;width:15px;height:15px;background:rgb(224,224,224)"></div>
<div class="abs" style="left:799px;top:540px;width:11px;height:15px;background:rgb(216,216,216)"></div>
<div class="abs" style="left:780px;top:570px;width:15px;height:15px;background:rgb(226,226,226)"></div>
<div class="abs" style="left:795px;top:570px;width:15px;height:15px;background:rgb(226,226,226)"></div>
<div class="abs" style="left:810px;top:570px;width:15px;height:15px;background:rgb(220,220,220)"></div>
<div class="abs" style="left:825px;top:570px;width:10px;height:15px;background:rgb(220,220,220)"></div>
<div class="abs" style="left:769px;top:585px;width:15px;height:15px;background:rgb(247,247,247)"></div>
<div class="abs" style="left:784px;top:585px;width:15px;height:15px;background:rgb(245,245,245)"></div>
<div class="abs" style="left:799px;top:585px;width:15px;height:15px;background:rgb(245,245,245)"></div>
<div class="abs" style="left:814px;top:585px;width:15px;height:15px;background:rgb(243,243,243)"></div>
<div class="abs" style="left:829px;top:585px;width:6px;height:15px;background:rgb(246,246,246)"></div>
<div class="abs" style="left:780px;top:615px;width:15px;height:15px;background:rgb(226,226,226)"></div>
<div class="abs" style="left:795px;top:615px;width:15px;height:15px;background:rgb(220,220,220)"></div>
<div class="abs" style="left:810px;top:615px;width:15px;height:15px;background:rgb(220,220,220)"></div>
<div class="abs" style="left:825px;top:615px;width:10px;height:15px;background:rgb(230,230,230)"></div>
<div class="abs" style="left:769px;top:645px;width:15px;height:15px;background:rgb(236,236,236)"></div>
<div class="abs" style="left:769px;top:660px;width:15px;height:14px;background:rgb(236,236,236)"></div>
<div class="abs" style="left:784px;top:645px;width:15px;height:15px;background:rgb(232,232,232)"></div>
<div class="abs" style="left:784px;top:660px;width:15px;height:14px;background:rgb(232,232,232)"></div>
<div class="abs" style="left:799px;top:645px;width:15px;height:15px;background:rgb(238,238,238)"></div>
<div class="abs" style="left:799px;top:660px;width:15px;height:14px;background:rgb(234,234,234)"></div>
<div class="abs" style="left:814px;top:645px;width:15px;height:15px;background:rgb(234,234,234)"></div>
<div class="abs" style="left:814px;top:660px;width:15px;height:14px;background:rgb(240,240,240)"></div>
<div class="abs" style="left:829px;top:645px;width:6px;height:15px;background:rgb(236,236,236)"></div>
<div class="abs" style="left:829px;top:660px;width:6px;height:14px;background:rgb(236,236,236)"></div>
<div class="abs" style="left:780px;top:690px;width:15px;height:15px;background:rgb(216,216,216)"></div>
<div class="abs" style="left:795px;top:690px;width:15px;height:15px;background:rgb(216,216,216)"></div>
<div class="abs" style="left:810px;top:690px;width:15px;height:15px;background:rgb(226,226,226)"></div>
<div class="abs" style="left:825px;top:690px;width:10px;height:15px;background:rgb(220,220,220)"></div>
<div class="abs" style="left:769px;top:720px;width:15px;height:14px;background:rgb(244,244,244)"></div>
<div class="abs" style="left:784px;top:720px;width:15px;height:14px;background:rgb(247,247,247)"></div>
<div class="abs" style="left:799px;top:720px;width:15px;height:14px;background:rgb(245,245,245)"></div>
<div class="abs" style="left:814px;top:720px;width:15px;height:14px;background:rgb(245,245,245)"></div>
<div class="abs" style="left:829px;top:720px;width:11px;height:14px;background:rgb(243,243,243)"></div>
<div class="abs" style="left:780px;top:734px;width:15px;height:15px;background:rgb(216,216,216)"></div>
<div class="abs" style="left:795px;top:734px;width:15px;height:15px;background:rgb(226,226,226)"></div>
<div class="abs" style="left:810px;top:734px;width:15px;height:15px;background:rgb(220,220,220)"></div>
<div class="abs" style="left:825px;top:734px;width:15px;height:15px;background:rgb(220,220,220)"></div>
<div class="abs" style="left:780px;top:765px;width:15px;height:15px;background:rgb(230,230,230)"></div>
<div class="abs" style="left:795px;top:765px;width:15px;height:15px;background:rgb(230,230,230)"></div>
<div class="abs" style="left:810px;top:765px;width:15px;height:15px;background:rgb(224,224,224)"></div>
<div class="abs" style="left:780px;top:780px;width:15px;height:15px;background:rgb(243,243,243)"></div>
<div class="abs" style="left:795px;top:780px;width:15px;height:15px;background:rgb(243,243,243)"></div>
<div class="abs" style="left:810px;top:780px;width:15px;height:15px;background:rgb(246,246,246)"></div>
<div class="abs" style="left:780px;top:810px;width:15px;height:15px;background:rgb(220,220,220)"></div>
<div class="abs" style="left:795px;top:810px;width:15px;height:15px;background:rgb(220,220,220)"></div>
<div class="abs" style="left:810px;top:810px;width:15px;height:15px;background:rgb(230,230,230)"></div>
<div class="abs" style="left:825px;top:810px;width:15px;height:15px;background:rgb(230,230,230)"></div>
<div class="abs" style="left:840px;top:810px;width:15px;height:15px;background:rgb(224,224,224)"></div>
<div class="abs" style="left:771px;top:840px;width:15px;height:15px;background:rgb(232,232,232)"></div>
<div class="abs" style="left:771px;top:855px;width:15px;height:14px;background:rgb(232,232,232)"></div>
<div class="abs" style="left:786px;top:840px;width:15px;height:15px;background:rgb(238,238,238)"></div>
<div class="abs" style="left:786px;top:855px;width:15px;height:14px;background:rgb(238,238,238)"></div>
<div class="abs" style="left:801px;top:840px;width:15px;height:15px;background:rgb(234,234,234)"></div>
<div class="abs" style="left:801px;top:855px;width:15px;height:14px;background:rgb(240,240,240)"></div>
<div class="abs" style="left:816px;top:840px;width:15px;height:15px;background:rgb(240,240,240)"></div>
<div class="abs" style="left:816px;top:855px;width:15px;height:14px;background:rgb(236,236,236)"></div>
<div class="abs" style="left:831px;top:840px;width:15px;height:15px;background:rgb(232,232,232)"></div>
<div class="abs" style="left:831px;top:855px;width:15px;height:14px;background:rgb(232,232,232)"></div>
<div class="abs" style="left:846px;top:840px;width:15px;height:15px;background:rgb(238,238,238)"></div>
<div class="abs" style="left:846px;top:855px;width:15px;height:14px;background:rgb(238,238,238)"></div>
<div class="abs" style="left:861px;top:840px;width:15px;height:15px;background:rgb(234,234,234)"></div>
<div class="abs" style="left:861px;top:855px;width:15px;height:14px;background:rgb(240,240,240)"></div>
<div class="abs" style="left:876px;top:840px;width:15px;height:15px;background:rgb(240,240,240)"></div>
<div class="abs" style="left:876px;top:855px;width:15px;height:14px;background:rgb(236,236,236)"></div>
<div class="abs" style="left:891px;top:840px;width:15px;height:15px;background:rgb(232,232,232)"></div>
<div class="abs" style="left:891px;top:855px;width:15px;height:14px;background:rgb(232,232,232)"></div>
<div class="abs" style="left:906px;top:840px;width:15px;height:15px;background:rgb(238,238,238)"></div>
<div class="abs" style="left:906px;top:855px;width:15px;height:14px;background:rgb(238,238,238)"></div>
<div class="abs" style="left:921px;top:840px;width:15px;height:15px;background:rgb(234,234,234)"></div>
<div class="abs" style="left:921px;top:855px;width:15px;height:14px;background:rgb(240,240,240)"></div>
<div class="abs" style="left:936px;top:840px;width:9px;height:15px;background:rgb(240,240,240)"></div>
<div class="abs" style="left:936px;top:855px;width:9px;height:14px;background:rgb(236,236,236)"></div>
<div class="abs" style="left:975px;top:375px;width:15px;height:14px;background:rgb(236,236,236)"></div>
<div class="abs" style="left:990px;top:375px;width:15px;height:14px;background:rgb(232,232,232)"></div>
<div class="abs" style="left:1005px;top:375px;width:15px;height:14px;background:rgb(238,238,238)"></div>
<div class="abs" style="left:1020px;top:375px;width:15px;height:14px;background:rgb(238,238,238)"></div>
<div class="abs" style="left:1035px;top:375px;width:15px;height:14px;background:rgb(234,234,234)"></div>
<div class="abs" style="left:1050px;top:375px;width:15px;height:14px;background:rgb(240,240,240)"></div>
<div class="abs" style="left:1065px;top:375px;width:10px;height:14px;background:rgb(240,240,240)"></div>
<div class="abs" style="left:975px;top:389px;width:15px;height:15px;background:rgb(245,245,245)"></div>
<div class="abs" style="left:975px;top:404px;width:15px;height:1px;background:rgb(245,245,245)"></div>
<div class="abs" style="left:990px;top:389px;width:15px;height:15px;background:rgb(243,243,243)"></div>
<div class="abs" style="left:990px;top:404px;width:15px;height:1px;background:rgb(246,246,246)"></div>
<div class="abs" style="left:1005px;top:389px;width:15px;height:15px;background:rgb(246,246,246)"></div>
<div class="abs" style="left:1005px;top:404px;width:15px;height:1px;background:rgb(244,244,244)"></div>
<div class="abs" style="left:1020px;top:389px;width:15px;height:15px;background:rgb(244,244,244)"></div>
<div class="abs" style="left:1020px;top:404px;width:15px;height:1px;background:rgb(247,247,247)"></div>
<div class="abs" style="left:1035px;top:389px;width:15px;height:15px;background:rgb(245,245,245)"></div>
<div class="abs" style="left:1035px;top:404px;width:15px;height:1px;background:rgb(245,245,245)"></div>
<div class="abs" style="left:1050px;top:389px;width:15px;height:15px;background:rgb(243,243,243)"></div>
<div class="abs" style="left:1050px;top:404px;width:15px;height:1px;background:rgb(246,246,246)"></div>
<div class="abs" style="left:1065px;top:389px;width:10px;height:15px;background:rgb(246,246,246)"></div>
<div class="abs" style="left:1065px;top:404px;width:10px;height:1px;background:rgb(244,244,244)"></div>
<div class="abs" style="left:975px;top:420px;width:15px;height:15px;background:rgb(210,210,210)"></div>
<div class="abs" style="left:990px;top:420px;width:15px;height:15px;background:rgb(220,220,220)"></div>
<div class="abs" style="left:1005px;top:420px;width:15px;height:15px;background:rgb(212,212,212)"></div>
<div class="abs" style="left:1020px;top:420px;width:15px;height:15px;background:rgb(212,212,212)"></div>
<div class="abs" style="left:1035px;top:420px;width:15px;height:15px;background:rgb(206,206,206)"></div>
<div class="abs" style="left:1050px;top:420px;width:15px;height:15px;background:rgb(206,206,206)"></div>
<div class="abs" style="left:1065px;top:420px;width:15px;height:15px;background:rgb(216,216,216)"></div>
<div class="abs" style="left:1080px;top:420px;width:15px;height:15px;background:rgb(210,210,210)"></div>
<div class="abs" style="left:975px;top:450px;width:15px;height:15px;background:rgb(234,234,234)"></div>
<div class="abs" style="left:975px;top:465px;width:15px;height:15px;background:rgb(240,240,240)"></div>
<div class="abs" style="left:990px;top:450px;width:15px;height:15px;background:rgb(236,236,236)"></div>
<div class="abs" style="left:990px;top:465px;width:15px;height:15px;background:rgb(236,236,236)"></div>
<div class="abs" style="left:1005px;top:450px;width:15px;height:15px;background:rgb(232,232,232)"></div>
<div class="abs" style="left:1005px;top:465px;width:15px;height:15px;background:rgb(232,232,232)"></div>
<div class="abs" style="left:1020px;top:450px;width:15px;height:15px;background:rgb(238,238,238)"></div>
<div class="abs" style="left:1020px;top:465px;width:15px;height:15px;background:rgb(234,234,234)"></div>
<div class="abs" style="left:1035px;top:450px;width:15px;height:15px;background:rgb(234,234,234)"></div>
<div class="abs" style="left:1035px;top:465px;width:15px;height:15px;background:rgb(240,240,240)"></div>
<div class="abs" style="left:1050px;top:450px;width:15px;height:15px;background:rgb(236,236,236)"></div>
<div class="abs" style="left:1050px;top:465px;width:15px;height:15px;background:rgb(236,236,236)"></div>
<div class="abs" style="left:990px;top:495px;width:15px;height:15px;background:rgb(216,216,216)"></div>
<div class="abs" style="left:1005px;top:495px;width:15px;height:15px;background:rgb(216,216,216)"></div>
<div class="abs" style="left:1020px;top:495px;width:15px;height:15px;background:rgb(226,226,226)"></div>
<div class="abs" style="left:1035px;top:495px;width:15px;height:15px;background:rgb(220,220,220)"></div>
<div class="abs" style="left:975px;top:495px;width:15px;height:15px;background:rgb(234,234,234)"></div>
<div class="abs" style="left:1050px;top:495px;width:15px;height:15px;background:rgb(247,247,247)"></div>
<div class="abs" style="left:975px;top:525px;width:15px;height:15px;background:rgb(247,247,247)"></div>
<div class="abs" style="left:990px;top:525px;width:15px;height:15px;background:rgb(245,245,245)"></div>
<div class="abs" style="left:1005px;top:525px;width:15px;height:15px;background:rgb(243,243,243)"></div>
<div class="abs" style="left:975px;top:540px;width:15px;height:15px;background:rgb(216,216,216)"></div>
<div class="abs" style="left:990px;top:540px;width:15px;height:15px;background:rgb(226,226,226)"></div>
<div class="abs" style="left:1005px;top:540px;width:15px;height:15px;background:rgb(220,220,220)"></div>
<div class="abs" style="left:990px;top:570px;width:15px;height:15px;background:rgb(220,220,220)"></div>
<div class="abs" style="left:1005px;top:570px;width:15px;height:15px;background:rgb(230,230,230)"></div>
<div class="abs" style="left:1020px;top:570px;width:15px;height:15px;background:rgb(230,230,230)"></div>
<div class="abs" style="left:1035px;top:570px;width:15px;height:15px;background:rgb(224,224,224)"></div>
<div class="abs" style="left:1050px;top:570px;width:15px;height:15px;background:rgb(216,216,216)"></div>
<div class="abs" style="left:1065px;top:570px;width:15px;height:15px;background:rgb(216,216,216)"></div>
<div class="abs" style="left:975px;top:585px;width:15px;height:15px;background:rgb(246,246,246)"></div>
<div class="abs" style="left:990px;top:585px;width:15px;height:15px;background:rgb(246,246,246)"></div>
<div class="abs" style="left:1005px;top:585px;width:15px;height:15px;background:rgb(244,244,244)"></div>
<div class="abs" style="left:1020px;top:585px;width:15px;height:15px;background:rgb(247,247,247)"></div>
<div class="abs" style="left:1035px;top:585px;width:15px;height:15px;background:rgb(247,247,247)"></div>
<div class="abs" style="left:1050px;top:585px;width:15px;height:15px;background:rgb(245,245,245)"></div>
<div class="abs" style="left:1065px;top:585px;width:15px;height:15px;background:rgb(243,243,243)"></div>
<div class="abs" style="left:975px;top:615px;width:15px;height:15px;background:rgb(216,216,216)"></div>
<div class="abs" style="left:990px;top:615px;width:15px;height:15px;background:rgb(226,226,226)"></div>
<div class="abs" style="left:1005px;top:615px;width:15px;height:15px;background:rgb(226,226,226)"></div>
<div class="abs" style="left:1020px;top:615px;width:15px;height:15px;background:rgb(220,220,220)"></div>
<div class="abs" style="left:1035px;top:615px;width:15px;height:15px;background:rgb(230,230,230)"></div>
<div class="abs" style="left:1050px;top:615px;width:15px;height:15px;background:rgb(230,230,230)"></div>
<div class="abs" style="left:975px;top:645px;width:15px;height:15px;background:rgb(236,236,236)"></div>
<div class="abs" style="left:975px;top:660px;width:15px;height:14px;background:rgb(236,236,236)"></div>
<div class="abs" style="left:990px;top:645px;width:15px;height:15px;background:rgb(232,232,232)"></div>
<div class="abs" style="left:990px;top:660px;width:15px;height:14px;background:rgb(238,238,238)"></div>
<div class="abs" style="left:1005px;top:645px;width:15px;height:15px;background:rgb(238,238,238)"></div>
<div class="abs" style="left:1005px;top:660px;width:15px;height:14px;background:rgb(234,234,234)"></div>
<div class="abs" style="left:1020px;top:645px;width:15px;height:15px;background:rgb(240,240,240)"></div>
<div class="abs" style="left:1020px;top:660px;width:15px;height:14px;background:rgb(240,240,240)"></div>
<div class="abs" style="left:1035px;top:645px;width:15px;height:15px;background:rgb(236,236,236)"></div>
<div class="abs" style="left:1035px;top:660px;width:15px;height:14px;background:rgb(236,236,236)"></div>
<div class="abs" style="left:975px;top:690px;width:15px;height:15px;background:rgb(216,216,216)"></div>
<div class="abs" style="left:990px;top:690px;width:15px;height:15px;background:rgb(226,226,226)"></div>
<div class="abs" style="left:1005px;top:690px;width:15px;height:15px;background:rgb(226,226,226)"></div>
<div class="abs" style="left:1020px;top:690px;width:15px;height:15px;background:rgb(220,220,220)"></div>
<div class="abs" style="left:975px;top:720px;width:15px;height:15px;background:rgb(240,240,240)"></div>
<div class="abs" style="left:975px;top:735px;width:15px;height:14px;background:rgb(240,240,240)"></div>
<div class="abs" style="left:990px;top:720px;width:15px;height:15px;background:rgb(236,236,236)"></div>
<div class="abs" style="left:990px;top:735px;width:15px;height:14px;background:rgb(236,236,236)"></div>
<div class="abs" style="left:1005px;top:720px;width:15px;height:15px;background:rgb(232,232,232)"></div>
<div class="abs" style="left:1005px;top:735px;width:15px;height:14px;background:rgb(238,238,238)"></div>
<div class="abs" style="left:1020px;top:720px;width:15px;height:15px;background:rgb(238,238,238)"></div>
<div class="abs" style="left:1020px;top:735px;width:15px;height:14px;background:rgb(234,234,234)"></div>
<div class="abs" style="left:1035px;top:720px;width:15px;height:15px;background:rgb(234,234,234)"></div>
<div class="abs" style="left:1035px;top:735px;width:15px;height:14px;background:rgb(240,240,240)"></div>
<div class="abs" style="left:1050px;top:720px;width:5px;height:15px;background:rgb(236,236,236)"></div>
<div class="abs" style="left:1050px;top:735px;width:5px;height:14px;background:rgb(236,236,236)"></div>
<div class="abs" style="left:975px;top:765px;width:15px;height:15px;background:rgb(216,216,216)"></div>
<div class="abs" style="left:990px;top:765px;width:15px;height:15px;background:rgb(226,226,226)"></div>
<div class="abs" style="left:1005px;top:765px;width:15px;height:15px;background:rgb(226,226,226)"></div>
<div class="abs" style="left:1020px;top:765px;width:15px;height:15px;background:rgb(220,220,220)"></div>
<div class="abs" style="left:975px;top:780px;width:15px;height:15px;background:rgb(244,244,244)"></div>
<div class="abs" style="left:990px;top:780px;width:15px;height:15px;background:rgb(247,247,247)"></div>
<div class="abs" style="left:1005px;top:780px;width:15px;height:15px;background:rgb(245,245,245)"></div>
<div class="abs" style="left:1020px;top:780px;width:15px;height:15px;background:rgb(245,245,245)"></div>
<div class="abs" style="left:975px;top:810px;width:15px;height:15px;background:rgb(216,216,216)"></div>
<div class="abs" style="left:990px;top:810px;width:15px;height:15px;background:rgb(216,216,216)"></div>
<div class="abs" style="left:1005px;top:810px;width:15px;height:15px;background:rgb(226,226,226)"></div>
<div class="abs" style="left:1020px;top:810px;width:15px;height:15px;background:rgb(220,220,220)"></div>
<div class="abs" style="left:1035px;top:810px;width:15px;height:15px;background:rgb(220,220,220)"></div>
<div class="abs" style="left:1050px;top:810px;width:15px;height:15px;background:rgb(230,230,230)"></div>
<div class="abs" style="left:975px;top:840px;width:15px;height:15px;background:rgb(236,236,236)"></div>
<div class="abs" style="left:975px;top:855px;width:15px;height:14px;background:rgb(236,236,236)"></div>
<div class="abs" style="left:990px;top:840px;width:15px;height:15px;background:rgb(232,232,232)"></div>
<div class="abs" style="left:990px;top:855px;width:15px;height:14px;background:rgb(232,232,232)"></div>
<div class="abs" style="left:1005px;top:840px;width:15px;height:15px;background:rgb(238,238,238)"></div>
<div class="abs" style="left:1005px;top:855px;width:15px;height:14px;background:rgb(234,234,234)"></div>
<div class="abs" style="left:1020px;top:840px;width:15px;height:15px;background:rgb(234,234,234)"></div>
<div class="abs" style="left:1020px;top:855px;width:15px;height:14px;background:rgb(240,240,240)"></div>
<div class="abs" style="left:223px;top:277px;width:550px;height:597px;border:3px solid #f82c2c;width:1550px"></div>
</body></html>
